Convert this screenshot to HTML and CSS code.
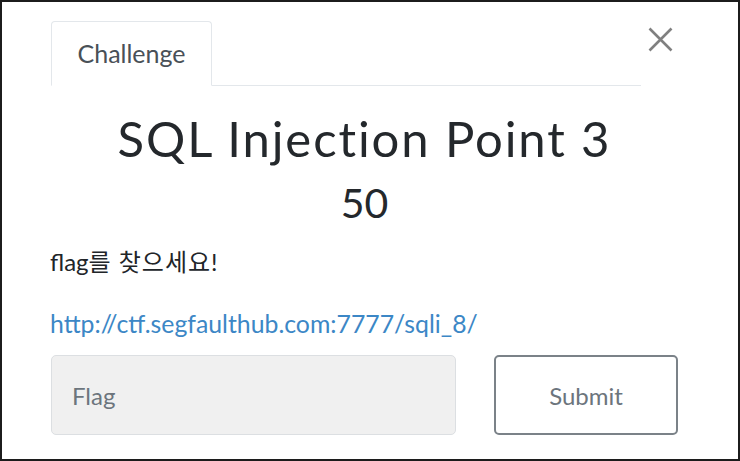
FILE: index.html
```html
<html>
    <head>
        <meta charset="utf-8">
        <link rel="stylesheet" href="styles.css">
    </head>

    <body>
        <div class="frame">
            <!-- tabs + close -->
            <div class="head">
                <div class="tabs">
                    <div class="tab">Challenge</div>
                </div>
                <div class="close">
                    <svg width="25" height="25" viewBox="0 0 25 25">
                        <path d="M1.5 1.5 L23.5 23.5 M23.5 1.5 L1.5 23.5" stroke="#808080" stroke-width="2.6" fill="none"/>
                    </svg>
                </div>
            </div>

            <h2 class="title">SQL Injection Point 3</h2>
            <h3 class="value">50</h3>

            <p class="desc">flag<span class="ko">를 찾으세요!</span></p>
            <p class="desc link"><a href="#">http://ctf.segfaulthub.com:7777/sqli_8/</a></p>

            <div class="answer">
                <div class="input">Flag</div>
                <div class="submit">Submit</div>
            </div>
        </div>
    </body>
</html>
```

FILE: styles.css
```css
body {
    margin          : 0;
    background      : #fff;
    font-family     : "Lato", "Noto Sans CJK KR", sans-serif;
}
.frame {
    width           : 740px;
    height          : 461px;
    box-sizing      : border-box;
    border          : 2px solid #1c1c1c;
    padding         : 19px 60px 0 49px;
}
.head {
    display         : flex;
    align-items     : flex-start;
}
.tabs {
    width           : 590px;
    height          : 65px;
    box-sizing      : border-box;
    border-bottom   : 1px solid #e3e7eb;
    display         : flex;
}
.tab {
    width           : 161px;
    height          : 65px;
    box-sizing      : border-box;
    border          : 1px solid #e3e7eb;
    border-bottom   : 1px solid #fff;
    border-radius   : 4px 4px 0 0;
    display         : flex;
    align-items     : center;
    justify-content : center;
    font-size       : 25px;
    color           : #495057;
    padding-bottom  : 2px;
}
.close {
    margin-left     : 7px;
    margin-top      : 6px;
    line-height     : 0;
}
.title {
    margin          : 24px 0 0;
    text-align      : center;
    font-weight     : 400;
    font-size       : 49px;
    line-height     : 56px;
    color           : #24282c;
    letter-spacing  : 1.9px;
}
.value {
    margin          : 13px 0 0;
    text-align      : center;
    font-weight     : 400;
    font-size       : 41px;
    line-height     : 48px;
    color           : #24282c;
}
.desc {
    margin          : 20px 0 0 -1px;
    font-size       : 24px;
    line-height     : 30px;
    color           : #212529;
}
.ko {
    font-size       : 24px;
    letter-spacing  : 1px;
}
.desc.link {
    margin-top      : 32px;
    font-size       : 24.8px;
}
.link a {
    color           : #3c87c6;
    text-decoration : none;
}
.answer {
    display         : flex;
    gap             : 38px;
    margin-top      : 16px;
}
.input {
    width           : 405px;
    height          : 80px;
    box-sizing      : border-box;
    background      : #f0f0f0;
    border          : 1px solid #dcdfe2;
    border-radius   : 5px;
    padding-left    : 20px;
    display         : flex;
    align-items     : center;
    font-size       : 24px;
    color           : #6c757d;
}
.submit {
    width           : 184px;
    height          : 80px;
    box-sizing      : border-box;
    border          : 2px solid #7b8288;
    border-radius   : 5px;
    display         : flex;
    align-items     : center;
    justify-content : center;
    font-size       : 24px;
    color           : #6c757d;
}
```
